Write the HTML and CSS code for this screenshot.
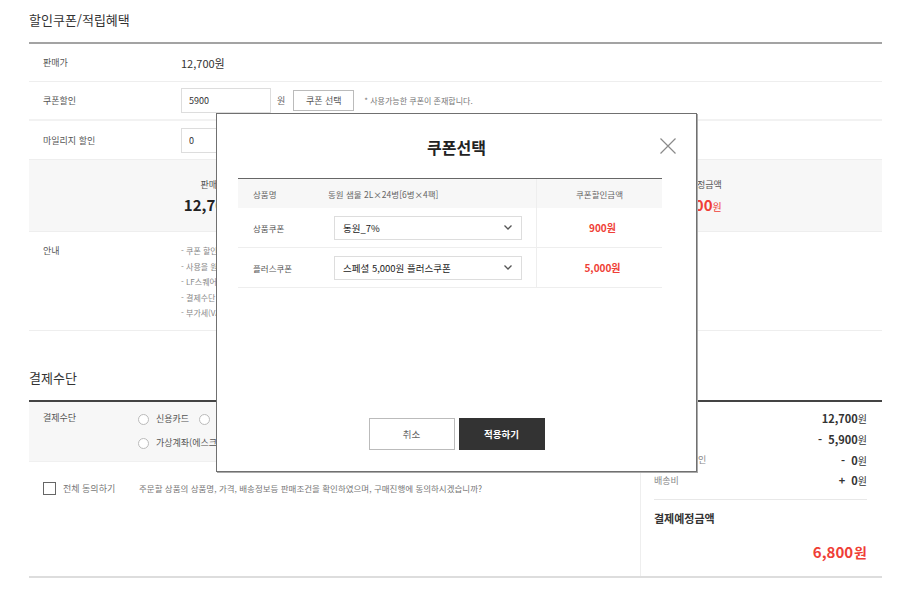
FILE: index.html
```html
<!DOCTYPE html>
<html lang="ko">
<head>
<meta charset="utf-8">
<title>할인쿠폰/적립혜택</title>
<link rel="stylesheet" href="styles.css">
</head>
<body>
<div class="page">
  <h2 class="sec-title">할인쿠폰/적립혜택</h2>
  <div class="benefit">
    <div class="row r1">
      <div class="label">판매가</div>
      <div class="value">12,700원</div>
    </div>
    <div class="row r2">
      <div class="label">쿠폰할인</div>
      <div class="value inline">
        <input class="num-input" type="text" value="5900">
        <span class="won">원</span>
        <button class="btn-small">쿠폰 선택</button>
        <span class="note">* 사용가능한 쿠폰이 존재합니다.</span>
      </div>
    </div>
    <div class="row r3">
      <div class="label">마일리지 할인</div>
      <div class="value inline">
        <input class="num-input" type="text" value="0">
        <span class="won">원</span>
      </div>
    </div>
    <div class="summary">
      <div class="sum-col">
        <div class="sum-label">판매가</div>
        <div class="sum-val">12,700<span class="unit">원</span></div>
      </div>
      <div class="sum-col">
        <div class="sum-label">&nbsp;</div>
        <div class="sum-val">&nbsp;</div>
      </div>
      <div class="sum-col">
        <div class="sum-label">결제예정금액</div>
        <div class="sum-val red">6,800<span class="unit">원</span></div>
      </div>
    </div>
    <div class="row guide">
      <div class="label">안내</div>
      <ul class="guide-list">
        <li>- 쿠폰 할인 안내</li>
        <li>- 사용을 원하시는</li>
        <li>- LF스퀘어 적립</li>
        <li>- 결제수단 안내</li>
        <li>- 부가세(VAT)</li>
      </ul>
    </div>
  </div>

  <h2 class="sec-title2">결제수단</h2>
  <div class="pay">
    <div class="pay-left">
      <div class="pay-row">
        <div class="label">결제수단</div>
        <div class="options">
          <label class="opt"><span class="radio"></span>신용카드</label>
          <label class="opt"><span class="radio"></span>계좌이체</label>
          <label class="opt full"><span class="radio"></span>가상계좌(에스크로)</label>
        </div>
      </div>
      <div class="agree">
        <span class="check"></span>
        <span class="agree-label">전체 동의하기</span>
        <span class="agree-text">주문할 상품의 상품명, 가격, 배송정보등 판매조건을 확인하였으며, 구매진행에 동의하시겠습니까?</span>
      </div>
    </div>
    <div class="pay-right">
      <div class="line-item"><span class="li-label">판매가</span><span class="li-val">12,700<span class="unit">원</span></span></div>
      <div class="line-item"><span class="li-label">쿠폰할인</span><span class="li-val">-&nbsp; 5,900<span class="unit">원</span></span></div>
      <div class="line-item"><span class="li-label">마일리지 할인</span><span class="li-val">-&nbsp; 0<span class="unit">원</span></span></div>
      <div class="line-item"><span class="li-label">배송비</span><span class="li-val">+&nbsp; 0<span class="unit">원</span></span></div>
      <div class="total-label">결제예정금액</div>
      <div class="total-val">6,800<span class="unit">원</span></div>
    </div>
  </div>
</div>

<div class="modal">
  <h3 class="modal-title">쿠폰선택</h3>
  <button class="close" aria-label="닫기">
    <svg width="16" height="16" viewBox="0 0 16 16"><path d="M0.5 0.5 L15.5 15.5 M15.5 0.5 L0.5 15.5" stroke="#8a8a8a" stroke-width="1.2" fill="none"/></svg>
  </button>
  <div class="ctable">
    <div class="ch">
      <div class="c1"><span class="ch-name">상품명</span><span class="ch-prod">동원 샘물 2L×24병[6병×4팩]</span></div>
      <div class="c2">쿠폰할인금액</div>
    </div>
    <div class="cr">
      <div class="c1"><span class="cr-name">상품쿠폰</span>
        <div class="select"><span>동원_7%</span><svg width="8" height="5" viewBox="0 0 8 5"><path d="M0.5 0.5 L4 4 L7.5 0.5" stroke="#555" stroke-width="1.3" fill="none"/></svg></div>
      </div>
      <div class="c2 amt">900원</div>
    </div>
    <div class="cr">
      <div class="c1"><span class="cr-name">플러스쿠폰</span>
        <div class="select"><span>스페셜 5,000원 플러스쿠폰</span><svg width="8" height="5" viewBox="0 0 8 5"><path d="M0.5 0.5 L4 4 L7.5 0.5" stroke="#555" stroke-width="1.3" fill="none"/></svg></div>
      </div>
      <div class="c2 amt">5,000원</div>
    </div>
  </div>
  <div class="modal-btns">
    <button class="btn-cancel">취소</button>
    <button class="btn-apply">적용하기</button>
  </div>
</div>
</body>
</html>
```

FILE: styles.css
```css
* { box-sizing: border-box; }
html, body { margin: 0; padding: 0; background: #fff; }
body {
  font-family: "Noto Sans CJK KR", "Noto Sans", sans-serif;
  color: #333;
  position: relative;
  width: 900px;
  height: 602px;
  overflow: hidden;
}
.page { width: 853px; margin-left: 29px; }
.sec-title {
  margin: 0;
  font-size: 13px;
  font-weight: 400;
  color: #333;
  border-bottom: 2px solid #a3a3a3;
  height: 44px;
  line-height: 40px;
}
.row {
  display: flex;
  align-items: center;
  border-bottom: 1px solid #eee;
}
.r1 { height: 38px; }
.r2 { height: 39px; border-bottom-width: 2px; border-bottom-color: #f2f2f2; }
.r3 { height: 39px; }
.label {
  width: 152px;
  padding-left: 14px;
  font-size: 9px;
  color: #555;
  flex: none;
}
.value { font-size: 11px; color: #333; }
.inline { display: flex; align-items: center; }
.num-input {
  width: 90px;
  height: 25px;
  border: 1px solid #ddd;
  padding: 0 7px;
  font-family: inherit;
  font-size: 9px;
  color: #333;
  outline: none;
}
.won { font-size: 9px; color: #666; margin: 0 8px 0 6px; }
.btn-small {
  height: 21px;
  width: 61px;
  border: 1px solid #bbb;
  background: #fff;
  font-family: inherit;
  font-size: 9px;
  color: #555;
  padding: 0;
}
.note { font-size: 8px; color: #777; margin-left: 10px; }

.summary {
  height: 72px;
  background: #f7f7f7;
  border-bottom: 1px solid #eee;
  display: grid;
  grid-template-columns: repeat(3, 242px);
  padding-left: 63px;
  padding-top: 17px;
}
.sum-col { text-align: center; }
.sum-label { font-size: 9px; color: #555; line-height: 16px; }
.sum-val { font-size: 15px; font-weight: 700; color: #222; line-height: 24px; }
.sum-val .unit { font-size: 10px; font-weight: 400; }
.sum-val.red { color: #ef3e36; }

.guide { height: 99px; align-items: flex-start; padding-top: 11px; }
.guide .label { line-height: 16px; }
.guide-list {
  list-style: none;
  margin: 0;
  padding: 0;
  font-size: 8px;
  color: #888;
  line-height: 15.5px;
}

.sec-title2 {
  margin: 0;
  padding-top: 37px;
  height: 71px;
  line-height: 20px;
  font-size: 13px;
  font-weight: 400;
  color: #333;
  border-bottom: 2px solid #444;
}

.pay {
  display: flex;
  border-bottom: 2px solid #ddd;
  height: 176px;
}
.pay-left { width: 611px; flex: none; }
.pay-row {
  background: #f7f7f7;
  height: 60px;
  display: flex;
  align-items: flex-start;
  padding-top: 5px;
  border-bottom: 1px solid #f0f0f0;
}
.pay-row .label { width: 109px; line-height: 22px; }
.options { display: flex; flex-wrap: wrap; width: 300px; }
.opt {
  display: flex;
  align-items: center;
  font-size: 9px;
  color: #555;
  line-height: 22px;
  height: 24px;
  margin-right: 10px;
}
.opt.full { width: 100%; }
.radio {
  width: 11px;
  height: 11px;
  border: 1px solid #bbb;
  border-radius: 50%;
  background: #fff;
  margin-right: 7px;
  flex: none;
}
.agree {
  display: flex;
  align-items: center;
  padding-left: 14px;
  margin-top: 19px;
  height: 14px;
}
.check {
  width: 13px;
  height: 13px;
  border: 1.5px solid #666;
  background: #fff;
  flex: none;
}
.agree-label { font-size: 9px; color: #777; margin-left: 7px; width: 76px; }
.agree-text { font-size: 8.5px; color: #777; }

.pay-right {
  width: 242px;
  flex: none;
  border-left: 1px solid #eee;
  padding: 6px 15px 0 13px;
}
.line-item {
  display: flex;
  justify-content: space-between;
  align-items: center;
  height: 20.7px;
}
.li-label { font-size: 9px; color: #888; }
.li-val { font-size: 11px; font-weight: 700; color: #333; }
.li-val .unit { font-weight: 400; font-size: 10px; }
.total-label {
  margin-top: 8px;
  border-top: 1px solid #e8e8e8;
  padding-top: 8px;
  font-size: 11px;
  font-weight: 700;
  line-height: 20px;
  color: #333;
}
.total-val {
  margin-top: 14px;
  text-align: right;
  font-size: 15px;
  font-weight: 700;
  color: #ef3e36;
  line-height: 20px;
}
.total-val .unit { font-size: 14px; margin-left: 1px; }

/* modal overlay */
.modal {
  position: absolute;
  left: 216px;
  top: 113px;
  width: 481px;
  height: 359px;
  background: #fff;
  border: 1px solid #707070;
  box-shadow: 1px 1px 0 #aaa;
  display: flex;
  flex-direction: column;
  padding: 0 21px 21px;
}
.modal-title {
  margin: 22px 0 0;
  text-align: center;
  font-size: 16px;
  font-weight: 700;
  line-height: 22px;
  color: #222;
}
.close {
  position: absolute;
  left: 443px;
  top: 24px;
  width: 16px;
  height: 16px;
  border: 0;
  padding: 0;
  background: none;
}
.close svg { display: block; }
.ctable {
  margin-top: 20px;
  border-top: 1px solid #666;
  width: 424px;
}
.ch, .cr { display: flex; }
.ch { background: #f7f7f7; height: 29px; font-size: 8.5px; color: #666; }
.cr { height: 40px; border-bottom: 1px solid #eee; }
.c1 {
  width: 299px;
  border-right: 1px solid #eee;
  display: flex;
  align-items: center;
  padding-left: 15px;
}
.c2 {
  flex: 1;
  display: flex;
  align-items: center;
  justify-content: center;
}
.ch-name { width: 75px; }
.ch-prod { color: #666; }
.cr-name { width: 81px; font-size: 8.5px; color: #555; }
.select {
  width: 188px;
  height: 24px;
  border: 1px solid #ddd;
  display: flex;
  align-items: center;
  justify-content: space-between;
  padding: 0 9px 0 8px;
  font-size: 9.5px;
  color: #222;
}
.select svg { display: block; }
.amt { font-size: 10px; font-weight: 700; color: #ef3e36; padding-left: 6px; }
.modal-btns {
  margin-top: auto;
  display: flex;
  justify-content: center;
  gap: 4px;
}
.btn-cancel, .btn-apply {
  width: 86px;
  height: 32px;
  font-family: inherit;
  font-size: 9.5px;
  padding: 0;
}
.btn-cancel { background: #fff; border: 1px solid #bbb; color: #666; }
.btn-apply { background: #333; border: 1px solid #333; color: #fff; font-weight: 700; }
```
